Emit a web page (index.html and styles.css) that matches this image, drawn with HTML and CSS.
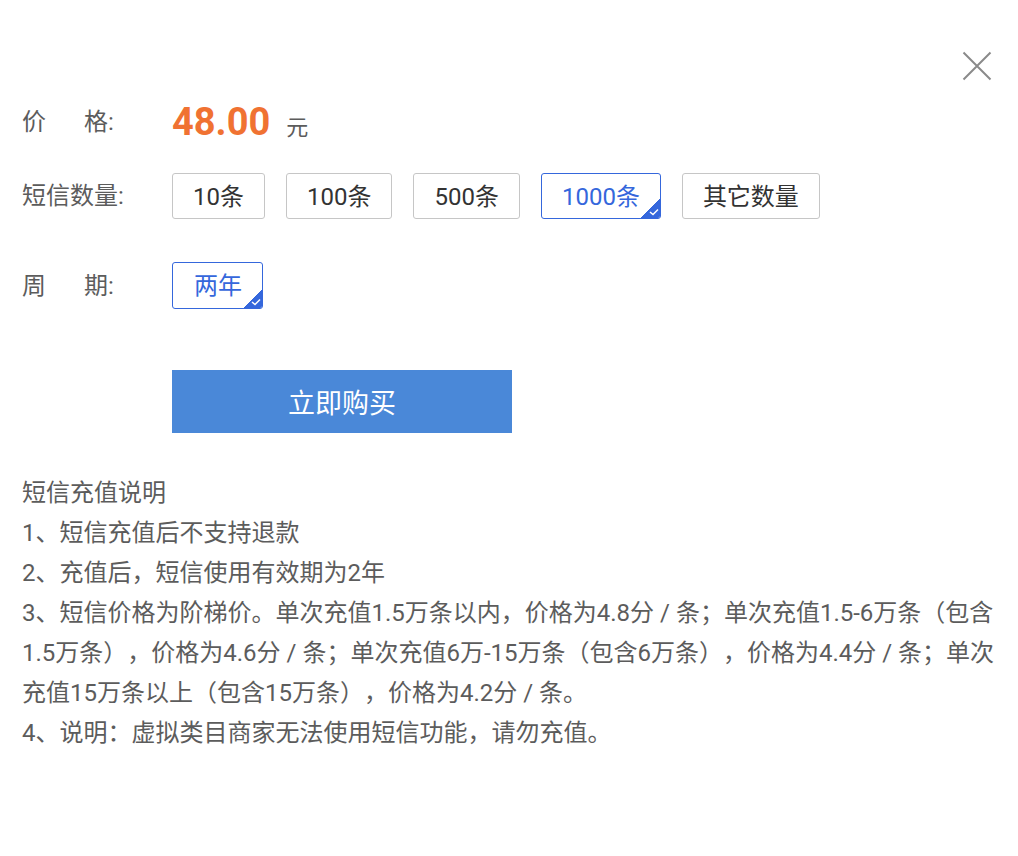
FILE: index.html
```html
<!DOCTYPE html>
<html lang="zh-CN">
<head>
<meta charset="utf-8">
<title>短信充值</title>
<link rel="stylesheet" href="styles.css">
</head>
<body>
<div class="dialog">
  <button class="close" aria-label="关闭">
    <svg width="30" height="30" viewBox="0 0 30 30"><path d="M1.5 1.5 L28.5 28.5 M28.5 1.5 L1.5 28.5" stroke="#8a8a8a" stroke-width="2" fill="none"/></svg>
  </button>

  <div class="row row-price">
    <div class="label"><span class="lbl-a">价</span>格:</div>
    <div class="price"><span class="amount">48.00</span><span class="unit">元</span></div>
  </div>

  <div class="row row-qty">
    <div class="label">短信数量:</div>
    <div class="options">
      <div class="opt">10条</div>
      <div class="opt">100条</div>
      <div class="opt">500条</div>
      <div class="opt selected">1000条<span class="tick"><svg width="10" height="8" viewBox="0 0 10 8"><path d="M1 4 L4 6.5 L9 1.5" stroke="#fff" stroke-width="1.5" fill="none"/></svg></span></div>
      <div class="opt">其它数量</div>
    </div>
  </div>

  <div class="row row-period">
    <div class="label"><span class="lbl-a">周</span>期:</div>
    <div class="options">
      <div class="opt selected">两年<span class="tick"><svg width="10" height="8" viewBox="0 0 10 8"><path d="M1 4 L4 6.5 L9 1.5" stroke="#fff" stroke-width="1.5" fill="none"/></svg></span></div>
    </div>
  </div>

  <div class="row row-buy">
    <div class="label"></div>
    <button class="buy">立即购买</button>
  </div>

  <div class="notes">
    <p>短信充值说明</p>
    <p>1、短信充值后不支持退款</p>
    <p>2、充值后，短信使用有效期为2年</p>
    <p>3、短信价格为阶梯价。单次充值1.5万条以内，价格为4.8分 / 条；单次充值1.5-6万条（包含1.5万条），价格为4.6分 / 条；单次充值6万-15万条（包含6万条），价格为4.4分 / 条；单次充值15万条以上（包含15万条），价格为4.2分 / 条。</p>
    <p>4、说明：虚拟类目商家无法使用短信功能，请勿充值。</p>
  </div>
</div>
</body>
</html>
```

FILE: styles.css
```css
* { box-sizing: border-box; }
html, body {
  margin: 0;
  padding: 0;
  background: #fff;
}
body {
  font-family: "Roboto", "Noto Sans CJK SC", sans-serif;
  color: #5c5c5c;
  font-size: 24px;
  text-spacing-trim: space-all;
}
.dialog {
  position: relative;
  width: 1018px;
  min-height: 856px;
  padding: 97px 22px 0 22px;
}
.close {
  position: absolute;
  top: 51px;
  right: 26px;
  width: 30px;
  height: 30px;
  padding: 0;
  border: none;
  background: none;
  cursor: pointer;
}
.close svg { display: block; }
.row {
  display: flex;
  align-items: center;
}
.label {
  width: 150px;
  flex: none;
  color: #5c5c5c;
  font-size: 24px;
  line-height: 30px;
}
.lbl-a { margin-right: 38px; }
.row-price { height: 50px; }
.price {
  display: flex;
  align-items: baseline;
}
.amount {
  color: #f07232;
  font-size: 38px;
  font-weight: bold;
  line-height: 50px;
}
.unit {
  margin-left: 16px;
  font-size: 22px;
  color: #5c5c5c;
}
.row-qty { margin-top: 26px; }
.row-period { margin-top: 43px; }
.options {
  display: flex;
  gap: 21px;
}
.opt {
  position: relative;
  height: 46px;
  padding: 1px 20px 0 20px;
  border: 1px solid #c6c6c6;
  border-radius: 3px;
  color: #333;
  font-size: 24px;
  line-height: 44px;
  white-space: nowrap;
  overflow: hidden;
}
.row-period .opt { height: 47px; line-height: 45px; padding: 1px 20px 0 21px; }
.opt.selected {
  border-color: #3567dc;
  color: #3567dc;
}
.tick {
  position: absolute;
  right: 0;
  bottom: 0;
  width: 19px;
  height: 19px;
  background: linear-gradient(135deg, transparent 50%, #3567dc 50%);
}
.tick svg {
  position: absolute;
  right: 1px;
  bottom: 2px;
}
.row-buy { margin-top: 61px; }
.buy {
  width: 340px;
  height: 63px;
  border: none;
  border-radius: 0;
  background: #4a88d8;
  color: #fff;
  font-family: "Roboto", "Noto Sans CJK SC", sans-serif;
  font-size: 27px;
  padding: 0;
  cursor: pointer;
}
.notes {
  margin-top: 40px;
  font-size: 24px;
  line-height: 40px;
  color: #5c5c5c;
}
.notes p { margin: 0; }
```
